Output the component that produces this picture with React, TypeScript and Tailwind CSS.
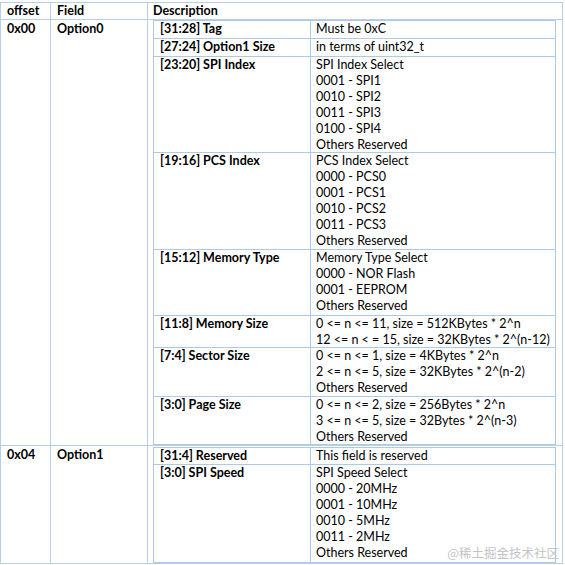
import React from 'react';

interface SubRow {
  bits: string;
  lines: string[];
  h: string;
}

const option0Rows: SubRow[] = [
  { bits: '[31:28] Tag', lines: ['Must be 0xC'], h: 'h-[18px]' },
  { bits: '[27:24] Option1 Size', lines: ['in terms of uint32_t'], h: 'h-[18px]' },
  {
    bits: '[23:20] SPI Index',
    lines: ['SPI Index Select', '0001 - SPI1', '0010 - SPI2', '0011 - SPI3', '0100 - SPI4', 'Others Reserved'],
    h: 'h-[96px]',
  },
  {
    bits: '[19:16] PCS Index',
    lines: ['PCS Index Select', '0000 - PCS0', '0001 - PCS1', '0010 - PCS2', '0011 - PCS3', 'Others Reserved'],
    h: 'h-[97px]',
  },
  {
    bits: '[15:12] Memory Type',
    lines: ['Memory Type Select', '0000 - NOR Flash', '0001 - EEPROM', 'Others Reserved'],
    h: 'h-[66px]',
  },
  {
    bits: '[11:8] Memory Size',
    lines: ['0 <= n <= 11, size = 512KBytes * 2^n', '12 <= n < = 15, size = 32KBytes * 2^(n-12)'],
    h: 'h-[32px]',
  },
  {
    bits: '[7:4] Sector Size',
    lines: ['0 <= n <= 1, size = 4KBytes * 2^n', '2 <= n <= 5, size = 32KBytes * 2^(n-2)', 'Others Reserved'],
    h: 'h-[49px]',
  },
  {
    bits: '[3:0] Page Size',
    lines: ['0 <= n <= 2, size = 256Bytes * 2^n', '3 <= n <= 5, size = 32Bytes * 2^(n-3)', 'Others Reserved'],
    h: 'h-[48px]',
  },
];

const option1Rows: SubRow[] = [
  { bits: '[31:4] Reserved', lines: ['This field is reserved'], h: 'h-[17px]' },
  {
    bits: '[3:0] SPI Speed',
    lines: ['SPI Speed Select', '0000 - 20MHz', '0001 - 10MHz', '0010 - 5MHz', '0011 - 2MHz', 'Others Reserved'],
    h: 'h-[98px]',
  },
];

function InnerTable({ rows }: { rows: SubRow[] }) {
  return (
    <div className="ml-[5px] mr-[6px] border-l border-r border-b border-[#adc9e4]">
      {rows.map((r, i) => (
        <div key={i} className={`flex border-t border-[#adc9e4] ${r.h}`}>
          <div className="w-[157px] shrink-0 border-r border-[#adc9e4] pl-[6px] font-bold">{r.bits}</div>
          <div className="flex-1 pl-[5px]">
            {r.lines.map((l, j) => (
              <div key={j} className="whitespace-pre">{l}</div>
            ))}
          </div>
        </div>
      ))}
    </div>
  );
}

export default function App() {
  return (
    <div className="relative h-[565px] w-[565px] bg-white pt-[2px] text-[12.5px] leading-[16px] text-black font-['Lato',sans-serif]">
      <div className="w-[563px] border border-[#b7d0e9]">
        {/* header */}
        <div className="flex h-[17px] border-b border-[#b7d0e9] font-bold">
          <div className="w-[50px] border-r border-[#b7d0e9] pl-[6px]">offset</div>
          <div className="w-[97px] border-r border-[#b7d0e9] pl-[6px]">Field</div>
          <div className="flex-1 pl-[5px]">Description</div>
        </div>

        {/* 0x00 */}
        <div className="flex border-b border-[#b7d0e9]">
          <div className="w-[50px] border-r border-[#b7d0e9] pl-[6px] pt-[1px] font-bold">0x00</div>
          <div className="w-[97px] border-r border-[#b7d0e9] pl-[6px] pt-[1px] font-bold">Option0</div>
          <div className="flex-1">
            <InnerTable rows={option0Rows} />
          </div>
        </div>

        {/* 0x04 */}
        <div className="flex">
          <div className="w-[50px] border-r border-[#b7d0e9] pl-[6px] pt-[1px] font-bold">0x04</div>
          <div className="w-[97px] border-r border-[#b7d0e9] pl-[6px] pt-[1px] font-bold">Option1</div>
          <div className="flex-1 pt-[1px]">
            <InnerTable rows={option1Rows} />
          </div>
        </div>
      </div>

      <div className="absolute right-[6px] top-[545px] text-[12.5px] text-[#c4c4c4] font-['Noto_Sans_CJK_SC',sans-serif]">
        @稀土掘金技术社区
      </div>
    </div>
  );
}
